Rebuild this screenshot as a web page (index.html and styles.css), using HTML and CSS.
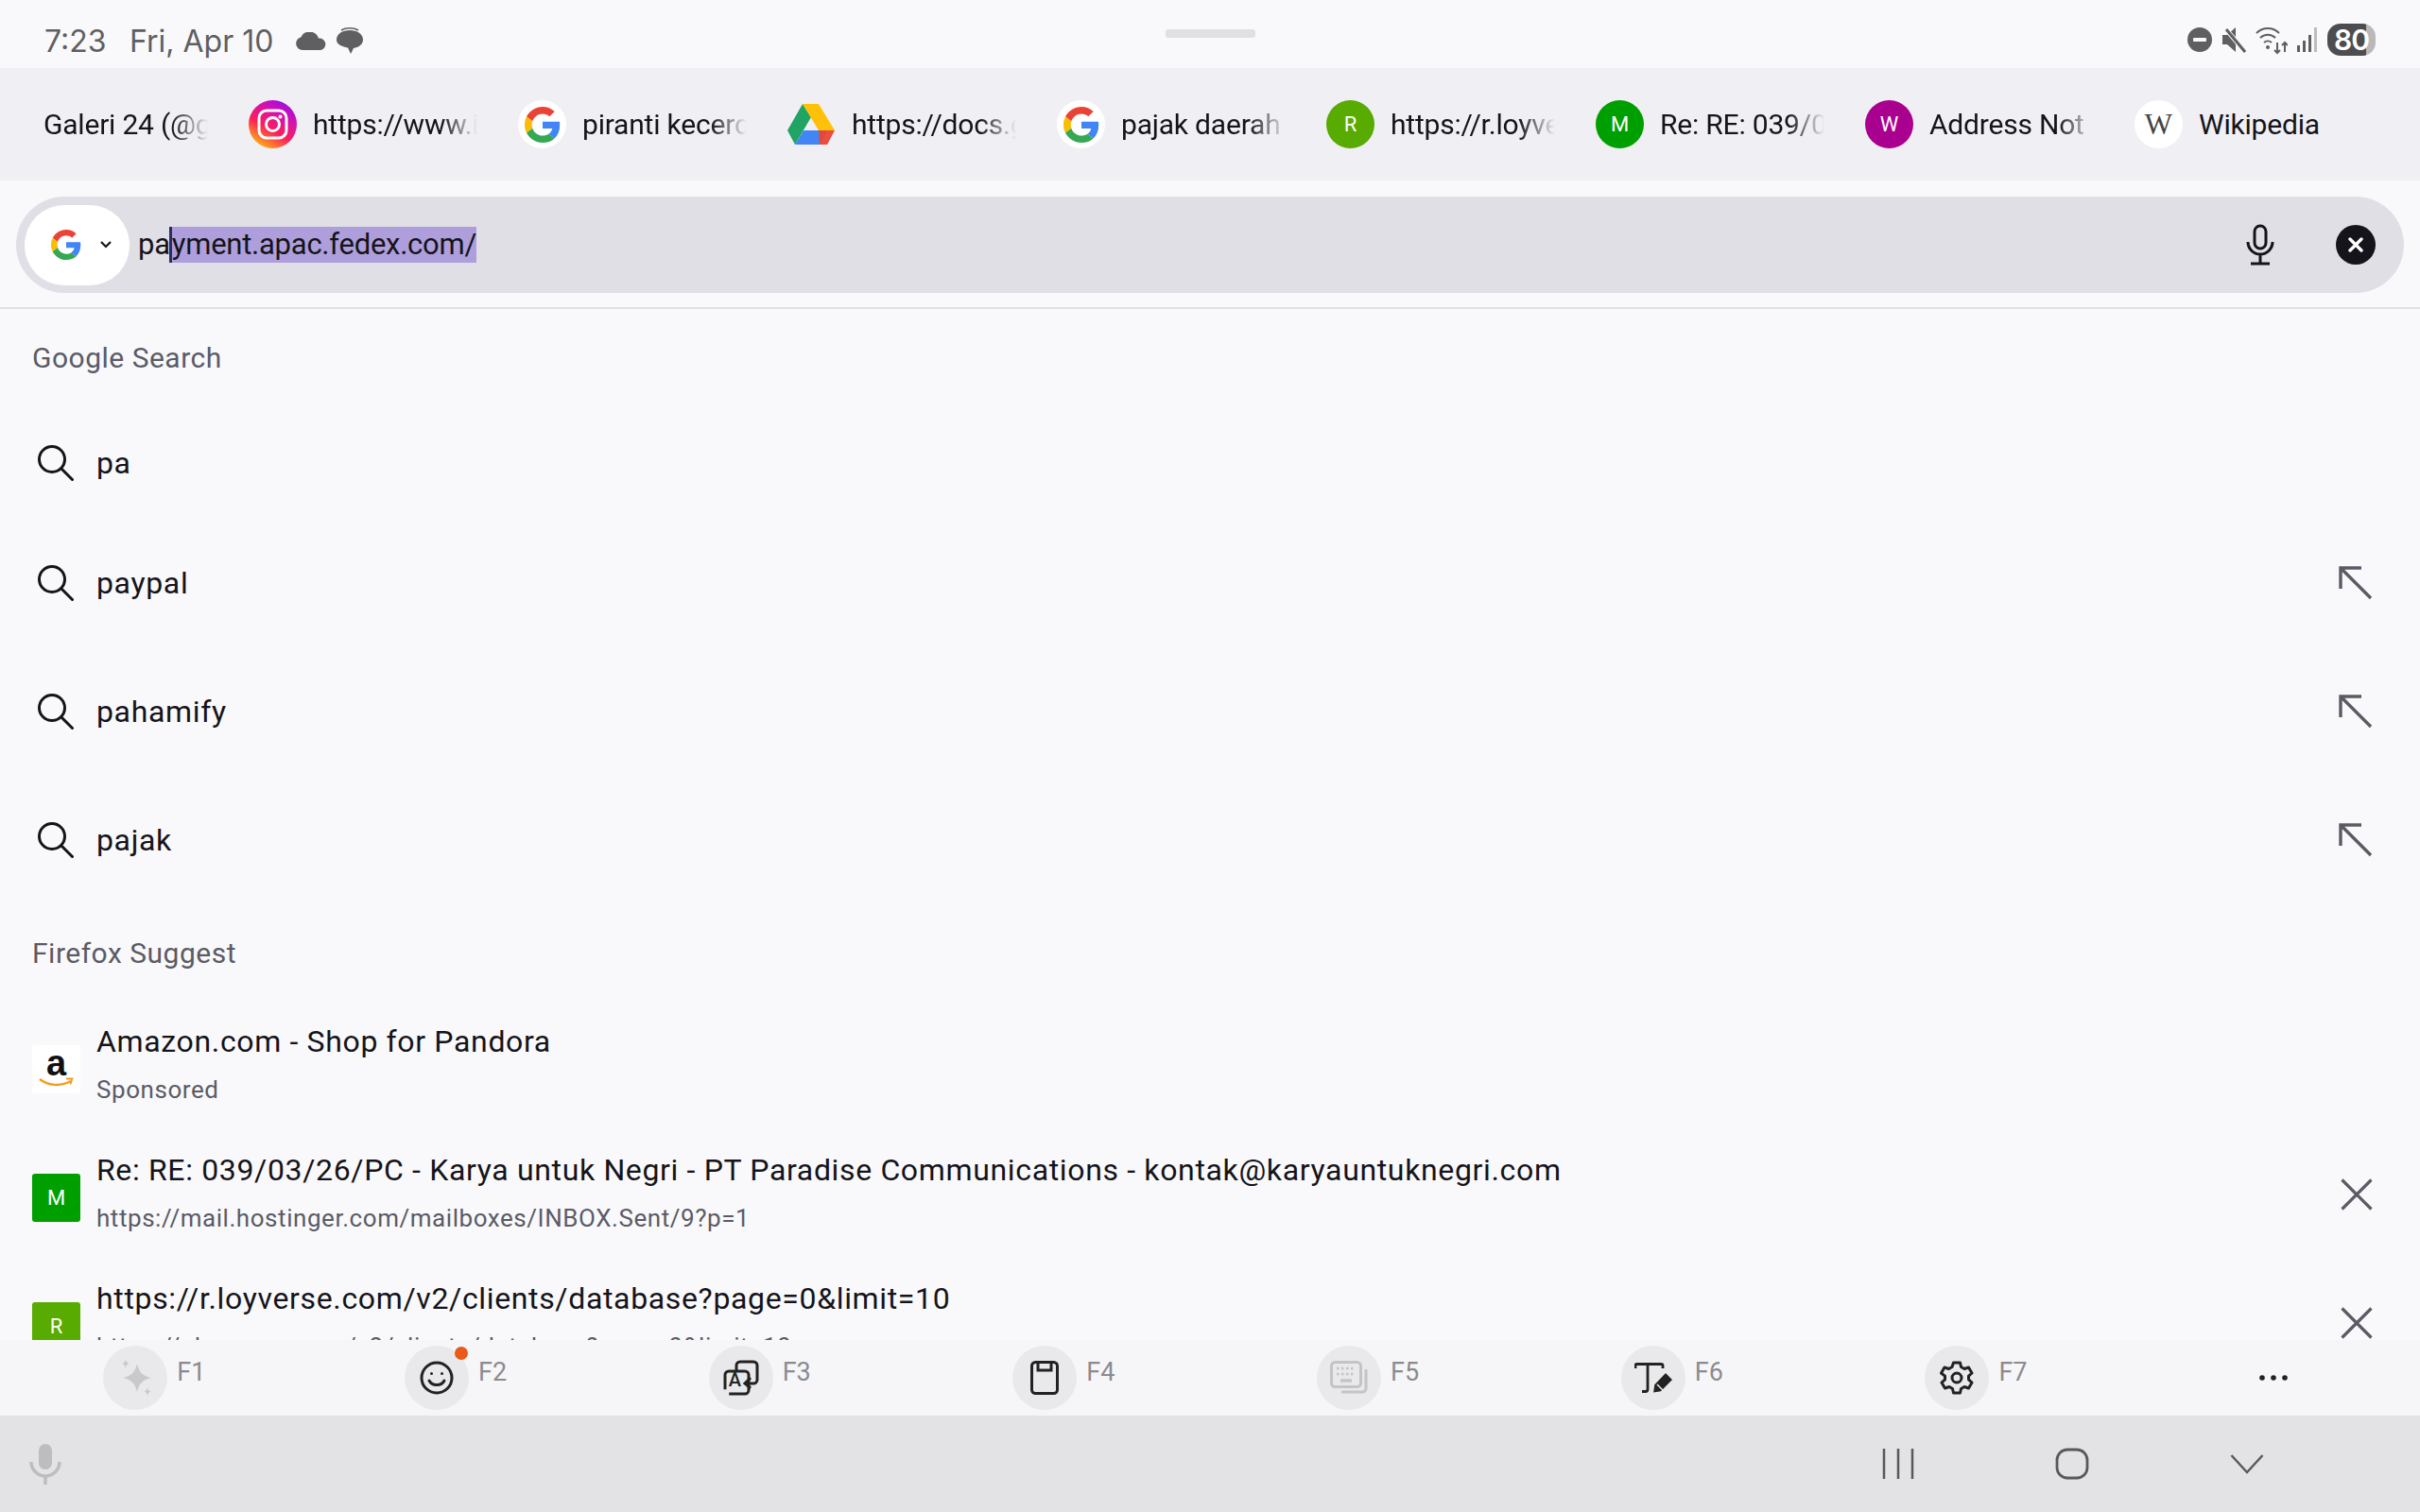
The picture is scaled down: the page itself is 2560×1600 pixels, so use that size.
FILE: index.html
```html
<!DOCTYPE html>
<html lang="en">
<head>
<meta charset="utf-8">
<title>Firefox search</title>
<link rel="stylesheet" href="styles.css">
</head>
<body>
<svg class="defs" width="0" height="0" aria-hidden="true">
  <symbol id="g" viewBox="0 0 48 48">
    <path fill="#EA4335" d="M24 9.5c3.54 0 6.71 1.22 9.21 3.6l6.85-6.85C35.9 2.38 30.47 0 24 0 14.62 0 6.51 5.38 2.56 13.22l7.98 6.19C12.43 13.72 17.74 9.5 24 9.5z"/>
    <path fill="#4285F4" d="M46.98 24.55c0-1.57-.15-3.09-.38-4.55H24v9.02h12.94c-.58 2.96-2.26 5.48-4.78 7.18l7.73 6c4.51-4.18 7.09-10.36 7.09-17.65z"/>
    <path fill="#FBBC05" d="M10.53 28.59c-.48-1.45-.76-2.99-.76-4.59s.27-3.14.76-4.59l-7.98-6.19C.92 16.46 0 20.12 0 24c0 3.88.92 7.54 2.56 10.78l7.97-6.19z"/>
    <path fill="#34A853" d="M24 48c6.48 0 11.93-2.13 15.89-5.81l-7.73-6c-2.15 1.45-4.92 2.3-8.16 2.3-6.26 0-11.57-4.22-13.47-9.91l-7.98 6.19C6.51 42.62 14.62 48 24 48z"/>
  </symbol>
  <symbol id="search" viewBox="0 0 38 38">
    <circle cx="15" cy="15" r="13.5" fill="none" stroke="#15141a" stroke-width="3"/>
    <path d="M25 25l11.5 11.5" stroke="#15141a" stroke-width="3" stroke-linecap="round"/>
  </symbol>
  <symbol id="arrow" viewBox="0 0 36 36">
    <path d="M2 24V2h22M2 2l32 32" fill="none" stroke="#5b5b66" stroke-width="3.4"/>
  </symbol>
  <symbol id="close" viewBox="0 0 34 34">
    <path d="M1.5 1.5l31 31M32.5 1.500l-31 31" fill="none" stroke="#5b5b66" stroke-width="3.2"/>
  </symbol>
</svg>

<div class="app">
  <header class="status">
    <div class="status-left">
      <span class="clock">7:23</span>
      <span class="date">Fri, Apr 10</span>
      <svg class="cloud" width="34" height="19" viewBox="0 0 34 19"><path fill="#5f5f61" d="M8 19a7 7 0 0 1-1.500-13.800A10 10 0 0 1 25 6.500 6.300 6.300 0 0 1 27 19z"/></svg>
      <svg class="bubble" width="28" height="29" viewBox="0 0 28 29"><path fill="#5f5f61" d="M14 3C22 3 28 7 28 13c0 5.500-5 8-10 9l-3 6-3-6.500C5 20 0 18 0 13 0 7 6 3 14 3z"/><path fill="none" stroke="#5f5f61" stroke-width="1.500" d="M5 3C10 0 18 0 23 3"/></svg>
    </div>
    <div class="handle"></div>
    <div class="status-right">
      <svg width="26" height="26" viewBox="0 0 26 26"><circle cx="13" cy="13" r="13" fill="#5f5f61"/><rect x="6" y="11" width="14" height="4" rx="1" fill="#f9f9fb"/></svg>
      <svg width="26" height="28" viewBox="0 0 26 28"><path fill="#5f5f61" d="M1 9h5l9-8v26l-9-8H1z"/><path d="M4 2l21 25" stroke="#f9f9fb" stroke-width="5"/><path d="M5 3l20 24" stroke="#5f5f61" stroke-width="3"/></svg>
      <svg width="34" height="32" viewBox="0 0 34 32"><g fill="none" stroke="#5f5f61" stroke-width="2"><path d="M1 9a17 17 0 0 1 24 0"/><path d="M5 14a11.500 11.500 0 0 1 16 0"/><path d="M9 19a6 6 0 0 1 8 0"/></g><circle cx="13" cy="24" r="2" fill="#5f5f61"/><path d="M23 19v11M20 27l3 3 3-3M31 29V19M28 22l3-3 3 3" fill="none" stroke="#5f5f61" stroke-width="2"/></svg>
      <svg width="22" height="26" viewBox="0 0 22 26"><rect x="0" y="19" width="3" height="7" fill="#5f5f61"/><rect x="6" y="14" width="3" height="12" fill="#5f5f61"/><rect x="12" y="8" width="3" height="18" fill="#5f5f61"/><rect x="18" y="0" width="3" height="26" fill="#bdbdbf"/></svg>
      <div class="battery"><span class="battery-num">80</span></div>
    </div>
  </header>

  <nav class="tabs">
    <div class="tab">
      <span class="tab-text fade">Galeri 24 (@galeri24</span>
    </div>
    <div class="tab">
      <svg class="tab-icon" width="51" height="51" viewBox="0 0 51 51">
        <defs><linearGradient id="ig" x1="0.2" y1="1" x2="0.8" y2="0"><stop offset="0" stop-color="#ffc20a"/><stop offset=".4" stop-color="#fb1f5c"/><stop offset=".75" stop-color="#d00fb8"/><stop offset="1" stop-color="#9010e8"/></linearGradient></defs>
        <circle cx="25.500" cy="25.500" r="25.500" fill="url(#ig)"/>
        <rect x="11" y="11" width="29" height="29" rx="8" fill="none" stroke="#fff" stroke-width="3"/>
        <circle cx="25.500" cy="25.500" r="7" fill="none" stroke="#fff" stroke-width="3"/>
        <circle cx="33.500" cy="17.500" r="2" fill="#fff"/>
      </svg>
      <span class="tab-text fade">https://www.instagram.com</span>
    </div>
    <div class="tab">
      <span class="tab-icon round"><svg width="38" height="38"><use href="#g"/></svg></span>
      <span class="tab-text fade">piranti kecerdasan</span>
    </div>
    <div class="tab">
      <svg class="tab-icon" width="51" height="51" viewBox="0 0 51 51">
        <path fill="#1fa463" d="M16 4 0 32l8 15 17-29z"/>
        <path fill="#ffc107" d="M16 4h17l17 28H33z"/>
        <path fill="#4285f4" d="M8 47 17 32h25l-8 15z"/>
        <path fill="#ea4335" d="M33 32h17l-8 15h-8z" opacity=".95"/>
      </svg>
      <span class="tab-text fade">https://docs.google.com</span>
    </div>
    <div class="tab">
      <span class="tab-icon round"><svg width="38" height="38"><use href="#g"/></svg></span>
      <span class="tab-text fade">pajak daerah bandung</span>
    </div>
    <div class="tab">
      <span class="tab-icon round green-l">R</span>
      <span class="tab-text fade">https://r.loyverse.com</span>
    </div>
    <div class="tab">
      <span class="tab-icon round green-d">M</span>
      <span class="tab-text fade">Re: RE: 039/03/26/PC</span>
    </div>
    <div class="tab">
      <span class="tab-icon round purple">W</span>
      <span class="tab-text fade">Address Not Found</span>
    </div>
    <div class="tab">
      <span class="tab-icon round wiki">W</span>
      <span class="tab-text">Wikipedia</span>
    </div>
  </nav>

  <div class="url-wrap">
    <div class="url-bar">
      <div class="engine">
        <svg width="32" height="32"><use href="#g"/></svg>
        <svg class="caret-down" width="14" height="10" viewBox="0 0 14 10"><path d="M2 2l5 5 5-5" fill="none" stroke="#15141a" stroke-width="2.200"/></svg>
      </div>
      <div class="url-text">pa<span class="sel">yment.apac.fedex.com/</span></div>
      <svg class="url-mic" width="32" height="44" viewBox="0 0 32 44"><rect x="10" y="2" width="12" height="24" rx="6" fill="none" stroke="#15141a" stroke-width="3"/><path d="M3 19a13 13 0 0 0 26 0M16 33v9M6 42h20" fill="none" stroke="#15141a" stroke-width="3"/></svg>
      <div class="url-clear"><svg width="18" height="18" viewBox="0 0 18 18"><path d="M3 3l12 12M15 3L3 15" stroke="#fff" stroke-width="3.400" stroke-linecap="round"/></svg></div>
    </div>
  </div>

  <main class="list">
    <div class="section">Google Search</div>
    <div class="row first">
      <svg class="search-ic" width="38" height="38"><use href="#search"/></svg>
      <span class="term">pa</span>
    </div>
    <div class="row">
      <svg class="search-ic" width="38" height="38"><use href="#search"/></svg>
      <span class="term">paypal</span>
      <svg class="end" width="36" height="36"><use href="#arrow"/></svg>
    </div>
    <div class="row">
      <svg class="search-ic" width="38" height="38"><use href="#search"/></svg>
      <span class="term">pahamify</span>
      <svg class="end" width="36" height="36"><use href="#arrow"/></svg>
    </div>
    <div class="row">
      <svg class="search-ic" width="38" height="38"><use href="#search"/></svg>
      <span class="term">pajak</span>
      <svg class="end" width="36" height="36"><use href="#arrow"/></svg>
    </div>
    <div class="section">Firefox Suggest</div>
    <div class="row">
      <div class="site amazon">
        <span class="amazon-a">a</span>
        <svg class="smile" width="38" height="11" viewBox="0 0 38 11"><path d="M2 2c9 7 22 8 33 2" fill="none" stroke="#f79c1c" stroke-width="2.500"/><path d="M30 1.500l6.500 0-2 6" fill="none" stroke="#f79c1c" stroke-width="1.800"/></svg>
      </div>
      <div class="texts"><div class="title">Amazon.com - Shop for Pandora</div><div class="sub">Sponsored</div></div>
    </div>
    <div class="row">
      <div class="site green-d">M</div>
      <div class="texts"><div class="title">Re: RE: 039/03/26/PC - Karya untuk Negri - PT Paradise Communications - kontak@karyauntuknegri.com</div><div class="sub">https://mail.hostinger.com/mailboxes/INBOX.Sent/9?p=1</div></div>
      <svg class="end" width="34" height="34"><use href="#close"/></svg>
    </div>
    <div class="row">
      <div class="site green-l">R</div>
      <div class="texts"><div class="title">https://r.loyverse.com/v2/clients/database?page=0&amp;limit=10</div><div class="sub">https://r.loyverse.com/v2/clients/database?page=0&amp;limit=10</div></div>
      <svg class="end" width="34" height="34"><use href="#close"/></svg>
    </div>
  </main>

  <div class="toolbar">
    <div class="tool">
      <span class="tool-circle"><svg width="40" height="42" viewBox="0 0 40 42" fill="#c9c9cb"><path d="M22 6c2 9 6 13 15 15-9 2-13 6-15 15-2-9-6-13-15-15 9-2 13-6 15-15z"/><path d="M10 1c.7 3.500 1.500 4.300 4 5-2.500.7-3.300 1.500-4 5-.7-3.500-1.500-4.300-4-5 2.500-.7 3.300-1.500 4-5zM33 31c.7 3 1.300 3.700 4 4.500-2.700.8-3.300 1.500-4 4.500-.7-3-1.300-3.700-4-4.500 2.700-.8 3.300-1.500 4-4.500z"/></svg></span>
      <span class="tool-label">F1</span>
    </div>
    <div class="tool">
      <span class="tool-circle">
        <svg width="36" height="36" viewBox="0 0 36 36" fill="none" stroke="#222" stroke-width="3"><circle cx="18" cy="18" r="16"/><path d="M10 21c3 6 13 6 16 0" stroke-linecap="round"/><circle cx="12.500" cy="13.500" r="1.500" fill="#222" stroke="none"/><circle cx="23.500" cy="13.500" r="1.500" fill="#222" stroke="none"/></svg>
        <span class="badge"></span>
      </span>
      <span class="tool-label">F2</span>
    </div>
    <div class="tool">
      <span class="tool-circle"><svg width="38" height="38" viewBox="0 0 38 38" fill="none" stroke="#222" stroke-width="3"><path d="M14 11V6a4 4 0 0 1 4-4h14a4 4 0 0 1 4 4v15a4 4 0 0 1-4 4h-8"/><path d="M29 19l-6 6 6 5" /><rect x="2" y="12" width="25" height="24" rx="4" stroke-dasharray="62 7" /></svg><span class="tool-a">A</span></span>
      <span class="tool-label">F3</span>
    </div>
    <div class="tool">
      <span class="tool-circle"><svg width="30" height="36" viewBox="0 0 30 36" fill="none" stroke="#222" stroke-width="3"><rect x="1.500" y="1.500" width="27" height="33" rx="4"/><path d="M8 2v8h14V2"/></svg></span>
      <span class="tool-label">F4</span>
    </div>
    <div class="tool">
      <span class="tool-circle"><svg width="40" height="36" viewBox="0 0 40 36" fill="none" stroke="#c4c4c6" stroke-width="3"><rect x="1.500" y="1.500" width="31" height="26" rx="4"/><path d="M38 9v20a4 4 0 0 1-4 4H12"/><path d="M7 8h20M7 14h20" stroke-dasharray="2.500 2.500" stroke-width="2.500"/><path d="M11 21h12" stroke-width="3.500"/></svg></span>
      <span class="tool-label">F5</span>
    </div>
    <div class="tool">
      <span class="tool-circle"><svg width="40" height="32" viewBox="0 0 40 32" fill="none" stroke="#222" stroke-width="2.800"><path d="M1 6V3Q1 1.500 3 1.500H28Q30 1.500 30 3V6M14 2V28Q14 30.500 11.500 30.500H8"/><path d="M21 30.500l1-7L33 12l6 6L27.500 29.500z" fill="#222" stroke-width="1.500"/><path d="M24 23l6 6" stroke="#e9e9eb" stroke-width="1.500"/></svg></span>
      <span class="tool-label">F6</span>
    </div>
    <div class="tool">
      <span class="tool-circle"><svg width="36" height="36" viewBox="0 0 36 36" fill="none" stroke="#222" stroke-width="3" stroke-linejoin="round"><path d="M14.500 2h7l1 4.500 3.500 2 4.500-1.500 3.500 6-3.500 3.200v3.600l3.500 3.200-3.500 6-4.500-1.500-3.500 2-1 4.500h-7l-1-4.500-3.500-2-4.500 1.500-3.500-6 3.500-3.200v-3.600L1.500 13l3.500-6 4.500 1.500 3.500-2z"/><circle cx="18" cy="18" r="5"/></svg></span>
      <span class="tool-label">F7</span>
    </div>
    <div class="tool dots">
      <svg width="30" height="6" viewBox="0 0 30 6" fill="#222"><circle cx="3" cy="3" r="2.800"/><circle cx="15" cy="3" r="2.800"/><circle cx="27" cy="3" r="2.800"/></svg>
    </div>
  </div>

  <footer class="nav">
    <svg class="nav-mic" width="34" height="44" viewBox="0 0 34 44"><rect x="10" y="1" width="14" height="27" rx="7" fill="#bdbdbf"/><path d="M2 20a15 15 0 0 0 30 0M17 36v8" fill="none" stroke="#bdbdbf" stroke-width="3.500"/></svg>
    <div class="nav-keys">
      <svg width="34" height="34" viewBox="0 0 34 34"><path d="M2 1v32M17 1v32M32 1v32" stroke="#59595b" stroke-width="2.500"/></svg>
      <svg width="36" height="34" viewBox="0 0 36 34"><rect x="2" y="2" width="32" height="30" rx="11" fill="none" stroke="#59595b" stroke-width="2.800"/></svg>
      <svg width="36" height="22" viewBox="0 0 36 22"><path d="M1.500 2l16.500 18L34.500 2" fill="none" stroke="#59595b" stroke-width="2.500"/></svg>
    </div>
  </footer>
</div>
</body>
</html>
```

FILE: styles.css
```css
* { box-sizing: border-box; }
html, body { margin: 0; height: 100%; }
body { font-family: Roboto, sans-serif; background: #f9f9fb; color: #15141a; overflow: hidden; }
.defs { position: absolute; }
.app { height: 1600px; display: flex; flex-direction: column; }

.status { height: 72px; flex: none; display: grid; grid-template-columns: 1fr 95px 1fr; padding: 14px 47px 0; align-items: center; background: #f9f9fb; }
.status-left { display: flex; align-items: center; font-family: Inter, sans-serif; font-size: 32px; color: #5f5f61; }
.clock { width: 90px; }
.date { width: 175px; }
.cloud { margin-right: 10px; }
.handle { height: 9px; border-radius: 3px; background: #e0e0e0; align-self: start; margin-top: 17px; }
.status-right { display: flex; align-items: center; justify-content: flex-end; gap: 10px; margin-top: -2px; }
.battery { width: 51px; height: 34px; border-radius: 14px; background: linear-gradient(90deg, #4d4d4f 80%, #b9b9bb 80%); color: #fff; font-size: 30px; font-weight: 600; font-family: Inter, sans-serif; display: flex; align-items: center; justify-content: center; }
.battery-num { letter-spacing: -1px; }

.tabs { height: 119px; flex: none; display: flex; align-items: center; padding-left: 46px; background: #f0eff4; overflow: hidden; }
.tab { display: flex; align-items: center; margin-right: 43px; flex: none; }
.tab-icon { width: 51px; height: 51px; margin-right: 17px; flex: none; }
.round { border-radius: 50%; display: flex; align-items: center; justify-content: center; font-size: 22px; color: #fff; background: #fff; }
.green-l { background: #58ab00; color: #fff; }
.green-d { background: #009f00; color: #fff; }
.purple { background: #aa0090; }
.wiki { background: #fff; color: #444; font-family: "Liberation Serif", serif; font-size: 31px; }
.tab-text { width: 174px; font-family: Roboto, sans-serif; font-size: 30px; letter-spacing: -.2px; white-space: nowrap; overflow: hidden; line-height: 40px; }
.fade { -webkit-mask-image: linear-gradient(90deg, #000 78%, transparent 100%); mask-image: linear-gradient(90deg, #000 78%, transparent 100%); }

.url-wrap { flex: none; height: 136px; padding: 17px 17px 15px; border-bottom: 2px solid #e0dfe5; }
.url-bar { height: 102px; border-radius: 51px; background: #e0dfe5; display: flex; align-items: center; padding-left: 9px; }
.engine { width: 111px; height: 85px; border-radius: 42px; background: #fff; display: flex; align-items: center; padding-left: 28px; flex: none; }
.caret-down { margin-left: 19px; }
.url-text { margin-left: 9px; font-family: Roboto, sans-serif; font-size: 31px; letter-spacing: -.25px; line-height: 38px; white-space: nowrap; flex: 1; }
.sel { display: inline-block; background: #ae9fdc; border-left: 3px solid #2d2a66; margin-left: -1px; }
.url-mic { flex: none; }
.url-clear { width: 42px; height: 42px; border-radius: 50%; background: #15141a; display: flex; align-items: center; justify-content: center; margin: 0 30px 0 64px; flex: none; }

.list { flex: 1; min-height: 0; overflow: hidden; }
.section { height: 103px; padding-left: 34px; display: flex; align-items: center; font-size: 30px; letter-spacing: .5px; color: #5b5b66; }
.row { height: 136px; display: flex; align-items: center; padding: 0 50px 0 34px; font-size: 32px; letter-spacing: .65px; }
.row.first { height: 119px; }
.search-ic { margin: 0 24px 0 6px; flex: none; }
.term { flex: 1; }
.end { flex: none; margin-left: auto; }
.site { width: 51px; height: 51px; border-radius: 3px; margin: 6px 17px 0 0; flex: none; display: flex; align-items: center; justify-content: center; font-size: 22px; letter-spacing: 0; position: relative; }
.amazon { background: #fff; flex-direction: column; line-height: 1; }
.amazon-a { font-family: "Liberation Sans", sans-serif; font-weight: 700; font-size: 38px; color: #111; margin-top: -12px; }
.smile { position: absolute; bottom: 6px; left: 6px; }
.title { line-height: 51px; white-space: nowrap; }
.sub { line-height: 51px; font-size: 26px; letter-spacing: .55px; color: #5b5b66; white-space: nowrap; }

.toolbar { height: 80px; flex: none; display: grid; grid-template-columns: repeat(7, 321.7px) 94px; padding-left: 106.3px; align-items: center; background: #f6f6f8; }
.tool { display: flex; align-items: flex-start; gap: 10px; }
.tool:first-child { margin-left: 3px; }
.tool-circle { width: 68px; height: 68px; border-radius: 50%; background: #e9e9eb; display: flex; align-items: center; justify-content: center; position: relative; }
.tool-label { font-size: 27px; line-height: 40px; margin-top: 8px; color: #8b8b8f; }
.tool-a { position: absolute; left: 21px; top: 24px; font-size: 20px; font-weight: 500; color: #222; }
.badge { position: absolute; width: 14px; height: 14px; border-radius: 50%; background: #e8591a; right: 1px; top: 1px; }
.dots { justify-content: center; align-items: center; }

.nav { height: 102px; flex: none; display: flex; align-items: center; justify-content: space-between; background: #e3e3e5; padding: 0 0 0 31px; }
.nav-keys { display: flex; align-items: center; margin-right: 165px; gap: 149px; }
```
